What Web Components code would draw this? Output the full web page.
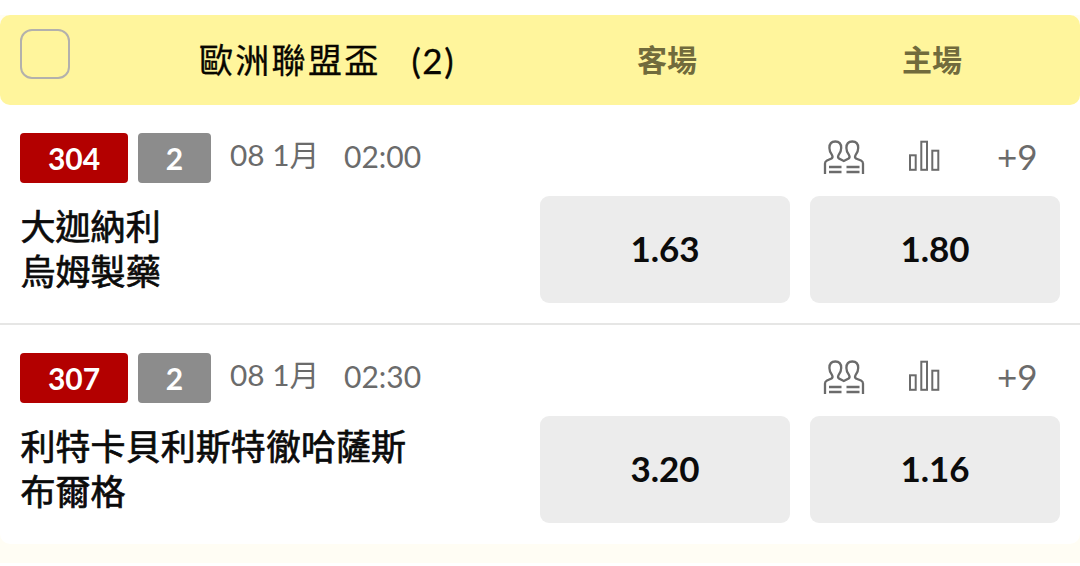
<!DOCTYPE html>
<html lang="zh-Hant">
<head>
<meta charset="utf-8">
<title>歐洲聯盟盃</title>
<style>
  body {
    margin: 0;
    background: #fff;
    font-family: Lato, "Noto Sans CJK TC", sans-serif;
    color: #0b0b0b;
  }
</style>
</head>
<body>
<league-panel>
  <league-header slot="header" count="2">
    歐洲聯盟盃
    <span slot="away">客場</span>
    <span slot="home">主場</span>
  </league-header>
  <match-row number="304" group="2" date="08 1月" time="02:00" more="+9">
    <span slot="away">大迦納利</span>
    <span slot="home">烏姆製藥</span>
    <odds-button slot="odds">1.63</odds-button>
    <odds-button slot="odds">1.80</odds-button>
  </match-row>
  <match-row number="307" group="2" date="08 1月" time="02:30" more="+9">
    <span slot="away">利特卡貝利斯特徹哈薩斯</span>
    <span slot="home">布爾格</span>
    <odds-button slot="odds">3.20</odds-button>
    <odds-button slot="odds">1.16</odds-button>
  </match-row>
</league-panel>

<script>
class LeaguePanel extends HTMLElement {
  constructor() {
    super();
    this.attachShadow({ mode: "open" }).innerHTML = `
      <style>
      :host {
        display: block;
        box-sizing: border-box;
        width: 1080px;
        height: 566px;
        padding-top: 15px;
        overflow: hidden;
      }
      .wrap {background: #fffdf4; height: 548px;}
      .card {background: #fff; border-radius: 10px; height: 529px;}
      </style>
      <div class="wrap">
        <div class="card">
          <slot name="header"></slot>
          <slot></slot>
        </div>
      </div>
    `;
  }
}

class LeagueHeader extends HTMLElement {
  constructor() {
    super();
    this.attachShadow({ mode: "open" }).innerHTML = `
      <style>
      :host {
        display: grid;
        grid-template-columns: 179px 333px 270px 260px;
        box-sizing: border-box;
        height: 90px;
        padding-left: 20px;
        background: #fff59c;
        border-radius: 10px;
        align-items: center;
      }
      .check {
        box-sizing: border-box;
        width: 50px;
        height: 50px;
        margin-bottom: 13px;
        border: 2px solid #b3b1ac;
        border-radius: 12px;
      }
      .title {
        display: flex;
        gap: 31px;
        font-size: 34px;
        line-height: 48px;
        letter-spacing: 2.3px;
        color: #080600;
        -webkit-text-stroke: 0.3px #080600;
      }
      .count {font-size: 35px; letter-spacing: 1.5px;}
      .col {
        margin-bottom: 3px;
        text-align: center;
        font-size: 30px;
        font-weight: 700;
        line-height: 44px;
        color: #716b3c;
      }
      </style>
      <div class="check"></div>
      <div class="title"><span><slot></slot></span><span class="count"></span></div>
      <div class="col"><slot name="away"></slot></div>
      <div class="col"><slot name="home"></slot></div>
    `;
  }

  connectedCallback() {
    this.shadowRoot.querySelector(".count").textContent = `(${this.getAttribute("count")})`;
  }
}

class OddsButton extends HTMLElement {
  constructor() {
    super();
    this.attachShadow({ mode: "open" }).innerHTML = `
      <style>
      :host {
        display: flex;
        align-items: center;
        justify-content: center;
        box-sizing: border-box;
        height: 107px;
        padding-bottom: 3px;
        background: #ececec;
        border-radius: 9px;
        font-size: 35px;
        font-weight: 700;
      }
      </style>
      <slot></slot>
    `;
  }
}

class PlayersIcon extends HTMLElement {
  constructor() {
    super();
    this.attachShadow({ mode: "open" }).innerHTML = `
      <style>
      :host, svg {display: block; width: 42px; height: 36px;}
      </style>
      <svg viewBox="0 0 42 36" fill="none" stroke="#6b6b6b" stroke-width="2.300">
        <path d="M2 34V23.500Q2 21.500 4 20.500L8.500 18.500Q10.300 17.200 9 15Q6.400 12 6.400 8C6.400 4 8.500 1.500 12.300 1.500S18.200 4 18.200 8Q18.200 12 15.600 15Q14.300 17.200 16 18.500L20.800 21L25.600 18.500Q27.300 17.200 26 15Q23.400 12 23.400 8C23.400 4 25.500 1.500 29.300 1.500S35.200 4 35.200 8Q35.200 12 32.600 15Q31.300 17.200 33 18.500L38 20.500Q40 21.500 40 23.500V34"/>
        <path d="M6 27H18.500M6 32H18.500M23.500 27H36.500M23.500 32H36.500"/>
      </svg>
    `;
  }
}

class StatsIcon extends HTMLElement {
  constructor() {
    super();
    this.attachShadow({ mode: "open" }).innerHTML = `
      <style>
      :host, svg {display: block; width: 32px; height: 36px;}
      </style>
      <svg viewBox="0 0 32 36" fill="none" stroke="#6b6b6b" stroke-width="2">
        <rect x="2" y="15.300" width="5.700" height="14.500"/>
        <rect x="13.300" y="1.700" width="5.700" height="28.100"/>
        <rect x="24.300" y="10.700" width="6" height="19.100"/>
      </svg>
    `;
  }
}

class MatchRow extends HTMLElement {
  constructor() {
    super();
    this.attachShadow({ mode: "open" }).innerHTML = `
      <style>
      :host {
        display: block;
        box-sizing: border-box;
        height: 220px;
        padding: 28px 20px 0;
        border-bottom: 2px solid #e6e6e5;
      }
      :host(:last-of-type) {border-bottom: 0;}
      .info {
        display: flex;
        height: 50px;
        align-items: center;
        color: #6b6b6b;
        font-size: 30px;
        line-height: 50px;
      }
      .tag {
        height: 50px;
        border-radius: 4px;
        text-align: center;
        color: #fff;
        font-weight: 700;
        line-height: 51px;
      }
      .number {width: 108px; background: #b30000;}
      .group {width: 73px; margin-left: 10px; background: #8c8c8c;}
      .date {width: 114px; margin-left: 19px; margin-bottom: 6px; font-size: 29.8px;}
      .time {flex: 1; margin-bottom: 5px;}
      players-icon {margin-right: 43px;}
      stats-icon {margin-right: 57px;}
      .more {width: 63px; margin-bottom: 4px; font-size: 35px;}
      .body {
        display: grid;
        grid-template-columns: 500px 250px 250px;
        column-gap: 20px;
        margin-top: 13px;
      }
      .teams {
        display: flex;
        flex-direction: column;
        padding: 8px 0 0 0.5px;
        font-size: 35px;
        line-height: 45px;
        letter-spacing: 0.05px;
        -webkit-text-stroke: 0.7px #0b0b0b;
      }
      </style>
      <div class="info">
        <span class="tag number"></span>
        <span class="tag group"></span>
        <span class="date"></span>
        <span class="time"></span>
        <players-icon></players-icon>
        <stats-icon></stats-icon>
        <span class="more"></span>
      </div>
      <div class="body">
        <div class="teams">
          <slot name="away"></slot>
          <slot name="home"></slot>
        </div>
        <slot name="odds"></slot>
      </div>
    `;
  }

  connectedCallback() {
    for (const name of ["number", "group", "date", "time", "more"]) {
      this.shadowRoot.querySelector("." + name).textContent = this.getAttribute(name);
    }
  }
}

customElements.define("league-panel", LeaguePanel);
customElements.define("league-header", LeagueHeader);
customElements.define("odds-button", OddsButton);
customElements.define("players-icon", PlayersIcon);
customElements.define("stats-icon", StatsIcon);
customElements.define("match-row", MatchRow);
</script>
</body>
</html>
